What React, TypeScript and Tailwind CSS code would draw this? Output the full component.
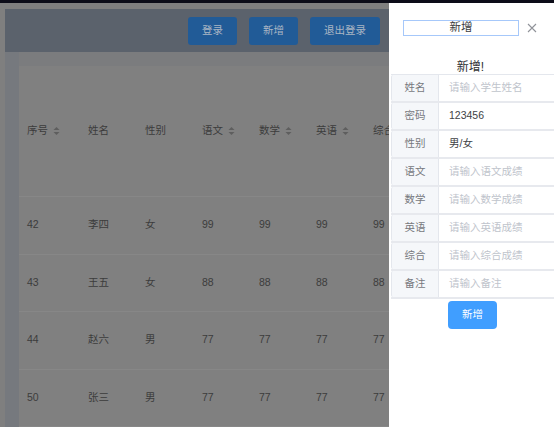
import React from 'react';

const font = { fontFamily: '"Liberation Sans", "Noto Sans CJK SC", sans-serif' };

const cols = [
  { label: '序号', sort: true },
  { label: '姓名', sort: false },
  { label: '性别', sort: false },
  { label: '语文', sort: true },
  { label: '数学', sort: true },
  { label: '英语', sort: true },
  { label: '综合', sort: false },
];

const rows = [
  ['42', '李四', '女', '99', '99', '99', '99'],
  ['43', '王五', '女', '88', '88', '88', '88'],
  ['44', '赵六', '男', '77', '77', '77', '77'],
  ['50', '张三', '男', '77', '77', '77', '77'],
];

const fields = [
  { label: '姓名', value: '', ph: '请输入学生姓名' },
  { label: '密码', value: '123456', ph: '' },
  { label: '性别', value: '男/女', ph: '' },
  { label: '语文', value: '', ph: '请输入语文成绩' },
  { label: '数学', value: '', ph: '请输入数学成绩' },
  { label: '英语', value: '', ph: '请输入英语成绩' },
  { label: '综合', value: '', ph: '请输入综合成绩' },
  { label: '备注', value: '', ph: '请输入备注' },
];

function Caret() {
  return (
    <svg width="7" height="10" viewBox="0 0 7 10" className="ml-[5px]">
      <path d="M3.5 1 L6.5 4 H0.5 Z" fill="#5e5e5e" />
      <path d="M3.5 9 L6.5 6 H0.5 Z" fill="#5e5e5e" />
    </svg>
  );
}

export default function App() {
  return (
    <div className="relative w-[554px] h-[427px] overflow-hidden bg-[#7f7f7f] text-[10.5px]" style={font}>
      <div className="h-[3px] bg-[#0c0c18]" />
      <div className="pl-[5px] pt-[6px]">
        <div className="h-[43px] bg-[#5b626c] flex items-center gap-[12px] pl-[183px]">
          <button className="h-[28px] w-[49px] rounded-[3px] bg-[#215b97] text-[#aab6c4]">登录</button>
          <button className="h-[28px] w-[49px] rounded-[3px] bg-[#215b97] text-[#aab6c4]">新增</button>
          <button className="h-[28px] w-[70px] rounded-[3px] bg-[#215b97] text-[#aab6c4]">退出登录</button>
        </div>
        <div className="flex">
          <div className="w-[14px] h-[380px] bg-[#76797e]" />
          <div className="flex-1">
            <div className="h-[14px] bg-[#7b7c7e]" />
            <div className="bg-[#808080] text-[#3c3c3c]">
              <div className="h-[131px] flex items-center border-b border-[#878787]">
                {cols.map((c, j) => (
                  <div key={c.label} className={`${j === 0 ? 'w-[61px]' : 'w-[57px]'} pl-[8px] flex items-center shrink-0`}>
                    <span>{c.label}</span>
                    {c.sort && <Caret />}
                  </div>
                ))}
              </div>
              {rows.map((r, i) => (
                <div key={i} className="h-[57.5px] flex items-center border-b border-[#878787]">
                  {r.map((v, j) => (
                    <div key={j} className={`${j === 0 ? 'w-[61px]' : 'w-[57px]'} pl-[8px] shrink-0`}>{v}</div>
                  ))}
                </div>
              ))}
            </div>
          </div>
        </div>
      </div>

      <div className="absolute left-[389px] top-[3px] w-[165px] h-[424px] bg-white">
        <div className="flex items-center pl-[14px] pt-[17px]">
          <div className="w-[116px] h-[16px] border border-[#a6c8fa] flex items-center justify-center text-[11.5px] text-[#3a3b3e]">
            新增
          </div>
          <svg width="10" height="10" viewBox="0 0 10 10" className="ml-[8px]">
            <path d="M1 1 L9 9 M9 1 L1 9" stroke="#909399" strokeWidth="1.1" />
          </svg>
        </div>
        <div className="text-center text-[12px] text-[#303133] mt-[24px] leading-[14px] pr-[2px]">新增!</div>
        <div className="ml-[2px] border-t border-[#e4e7ed]">
          {fields.map((f) => (
            <div key={f.label} className="flex h-[28px] border-b-2 border-[#e7e9ee]">
              <div className="w-[48px] bg-[#f5f7fa] border-l border-r border-[#e4e7ed] flex items-center justify-center text-[#77797e] rounded-l-[2px]">
                {f.label}
              </div>
              <div className={`flex-1 pl-[10px] flex items-center ${f.value ? 'text-[#404245]' : 'text-[#c0c4cc]'}`}>
                {f.value || f.ph}
              </div>
            </div>
          ))}
        </div>
        <div className="flex pl-[59px] mt-[2px]">
          <button className="w-[49px] h-[28px] rounded-[4px] bg-[#409eff] text-white text-[10.5px]">新增</button>
        </div>
      </div>
    </div>
  );
}
